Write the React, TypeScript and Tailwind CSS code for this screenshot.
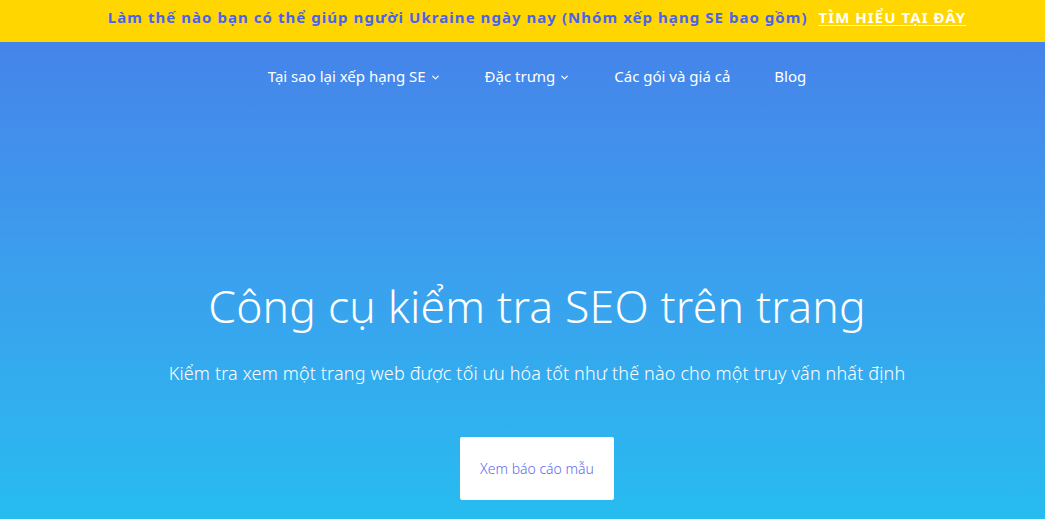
import { ChevronDown } from "lucide-react";

const navItems = [
  { label: "Tại sao lại xếp hạng SE", dropdown: true },
  { label: "Đặc trưng", dropdown: true },
  { label: "Các gói và giá cả", dropdown: false },
  { label: "Blog", dropdown: false },
];

export default function App() {
  return (
    <div className="min-h-screen font-['Noto_Sans',sans-serif]">
      {/* Ukraine banner */}
      <div className="flex h-[42px] items-center justify-center gap-[11px] bg-[#ffd600] pb-[8px] pl-[29px] text-[15px] font-bold tracking-[1.05px]">
        <span className="text-[#4b62ee]">
          Làm thế nào bạn có thể giúp người Ukraine ngày nay (Nhóm xếp hạng SE bao gồm)
        </span>
        <a href="#" className="text-white underline underline-offset-2">
          TÌM HIỂU TẠI ĐÂY
        </a>
      </div>

      <main className="flex h-[477px] flex-col items-center bg-gradient-to-b from-[#4584ea] to-[#26bcf0] pl-[29px] text-white">
        <nav className="flex items-center gap-[44px] pt-[23px] text-[15px]">
          {navItems.map((item) => (
            <a key={item.label} href="#" className="flex items-center gap-[4px]">
              {item.label}
              {item.dropdown && <ChevronDown className="mt-[2px] h-[11px] w-[11px]" strokeWidth={2.75} />}
            </a>
          ))}
        </nav>

        <h1 className="mt-[196px] text-[44.5px] font-light leading-none tracking-[0.2px]">
          Công cụ kiểm tra SEO trên trang
        </h1>
        <p className="mt-[32px] text-[18px] font-light tracking-[0.15px]">
          Kiểm tra xem một trang web được tối ưu hóa tốt như thế nào cho một truy vấn nhất định
        </p>

        <button
          type="button"
          className="mt-[50px] h-[63px] w-[154px] rounded-[2px] bg-white text-[14px] font-light text-[#5a6cf0]"
        >
          Xem báo cáo mẫu
        </button>
      </main>
    </div>
  );
}
